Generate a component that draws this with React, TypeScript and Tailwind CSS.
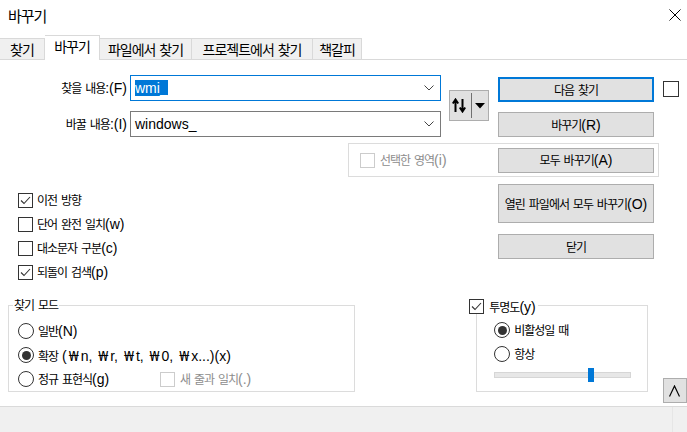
import React from 'react';

const HANGUL = /([\uAC00-\uD7A3]+|₩)/;

function T({ s, k = 'n' }: { s: string; k?: 'n' | 'tab' | 'title' }) {
  const parts = s.split(HANGUL);
  const hc =
    k === 'tab'
      ? "font-['Noto_Sans_CJK_KR',sans-serif] text-[14px] tracking-[-1px]"
      : k === 'title'
      ? "font-['Noto_Sans_CJK_KR',sans-serif] text-[15px] tracking-[-1px]"
      : "font-['Noto_Sans_CJK_KR',sans-serif] text-[12px] tracking-[-1px]";
  return (
    <span className="whitespace-pre">
      {parts.map((p, i) => {
        if (p === '') return null;
        if (p === '₩')
          return (
            <span key={i} className="inline-block w-[14px] text-center font-['Noto_Sans','Noto_Sans_CJK_KR',sans-serif] text-[15px]">
              ₩
            </span>
          );
        if (/[\uAC00-\uD7A3]/.test(p))
          return (
            <span key={i} className={hc}>
              {p}
            </span>
          );
        return (
          <span key={i} className="font-['Liberation_Sans',sans-serif] text-[14px]">
            {p}
          </span>
        );
      })}
    </span>
  );
}

function Check({ checked = false, disabled = false, big = false }: { checked?: boolean; disabled?: boolean; big?: boolean }) {
  return (
    <span
      className={`flex shrink-0 items-center justify-center bg-white border ${big ? 'w-[16px] h-[16px]' : 'w-[15px] h-[15px]'} ${disabled ? 'border-[#cccccc]' : 'border-[#333333]'}`}
    >
      {checked && (
        <svg width="13" height="13" viewBox="0 0 13 13">
          <polyline points="2,6.5 5,9.5 11,3" fill="none" stroke="#333333" strokeWidth="1.1" />
        </svg>
      )}
    </span>
  );
}

function Radio({ checked = false }: { checked?: boolean }) {
  return (
    <span className="flex shrink-0 items-center justify-center w-[16px] h-[16px] rounded-full border border-[#333333] bg-white">
      {checked && <span className="w-[9px] h-[9px] rounded-full bg-[#333333]" />}
    </span>
  );
}

function Chevron() {
  return (
    <svg className="ml-auto" width="10" height="6" viewBox="0 0 10 6">
      <polyline points="0.5,0.5 5,5 9.5,0.5" fill="none" stroke="#444444" strokeWidth="1" />
    </svg>
  );
}

function Btn({ s, tall = false, def = false }: { s: string; tall?: boolean; def?: boolean }) {
  return (
    <div
      className={`flex shrink-0 items-center justify-center w-[156px] bg-[#e1e1e1] whitespace-nowrap ${tall ? 'h-[39px]' : 'h-[25px]'} ${def ? 'border-2 border-[#0078d7]' : 'border border-[#adadad]'}`}
    >
      <T s={s} />
    </div>
  );
}

function Tab({ s, w, sel = false }: { s: string; w: string; sel?: boolean }) {
  return sel ? (
    <div className={`${w} h-[25px] -mb-px flex items-center justify-center pb-[4px] bg-white border-t border-r border-[#d9d9d9] z-10`}>
      <T s={s} k="tab" />
    </div>
  ) : (
    <div className={`${w} h-[21px] flex items-center justify-center bg-[#f0f0f0] border-t border-r border-[#d9d9d9]`}>
      <T s={s} k="tab" />
    </div>
  );
}

export default function App() {
  return (
    <div className="w-[687px] h-[432px] bg-white overflow-hidden flex flex-col text-black font-['Noto_Sans_CJK_KR',sans-serif] text-[12px] leading-none select-none">
      {/* Title bar */}
      <div className="h-[30px] shrink-0 flex items-center pl-[8px] pr-[6px]">
        <T s="바꾸기" k="title" />
        <svg className="ml-auto" width="12" height="12" viewBox="0 0 12 12">
          <path d="M0.5 0.5 L11.5 11.5 M11.5 0.5 L0.5 11.5" stroke="#000000" strokeWidth="1" />
        </svg>
      </div>

      {/* Tabs */}
      <div className="h-[30px] shrink-0 flex items-end border-b border-[#d9d9d9]">
        <Tab s="찾기" w="w-[45px]" />
        <Tab s="바꾸기" w="w-[55px]" sel />
        <Tab s="파일에서 찾기" w="w-[92px]" />
        <Tab s="프로젝트에서 찾기" w="w-[121px]" />
        <Tab s="책갈피" w="w-[49px]" />
      </div>

      {/* Body */}
      <div className="flex flex-col shrink-0">
        {/* Row 1: find / replace */}
        <div className="flex items-start mt-[15px]">
          <div className="flex flex-col gap-[10px]">
            <div className="flex items-center h-[26px]">
              <span className="w-[127px] text-right">
                <T s="찾을 내용:(F)" />
              </span>
              <div className="ml-[3px] w-[311px] h-[26px] border border-[#0078d7] bg-white flex items-center pl-[4px] pr-[6px]">
                <span className="bg-[#0078d7] text-white font-['Liberation_Sans',sans-serif] text-[14px] leading-[16px]">wmi_</span>
                <Chevron />
              </div>
            </div>
            <div className="flex items-center h-[26px]">
              <span className="w-[127px] text-right">
                <T s="바꿀 내용:(I)" />
              </span>
              <div className="ml-[3px] w-[311px] h-[26px] border border-[#7a7a7a] bg-white flex items-center pl-[4px] pr-[6px]">
                <span className="font-['Liberation_Sans',sans-serif] text-[14px] leading-[16px]">windows_</span>
                <Chevron />
              </div>
            </div>
          </div>

          <div className="ml-[8px] mt-[15px] w-[40px] h-[31px] bg-[#e1e1e1] border border-[#adadad] flex items-center pl-[2px]">
            <svg width="14" height="15" viewBox="0 0 14 15">
              <path d="M3.5 14 V2.5 M0.8 5.5 L3.5 1.5 L6.2 5.5" fill="none" stroke="#000000" strokeWidth="2" />
              <path d="M10.5 1 V12.5 M7.8 9.5 L10.5 13.5 L13.2 9.5" fill="none" stroke="#000000" strokeWidth="2" />
            </svg>
            <span className="ml-[5px] w-px h-[25px] bg-[#707070]" />
            <svg className="ml-[3px]" width="10" height="6" viewBox="0 0 10 6">
              <polygon points="0,0 10,0 5,5.5" fill="#000000" />
            </svg>
          </div>

          <div className="ml-[9px] mt-[2px] flex flex-col gap-[10px]">
            <Btn s="다음 찾기" def />
            <Btn s="바꾸기(R)" />
          </div>

          <div className="ml-[9px] mt-[6px]">
            <Check big />
          </div>
        </div>

        {/* Row 2: in selection */}
        <div className="mt-[6px] ml-[348px] w-[311px] h-[34px] border border-[#dcdcdc] flex items-center">
          <span className="ml-[11px]">
            <Check disabled />
          </span>
          <span className="ml-[5px] text-[#8d8d8d]">
            <T s="선택한 영역(i)" />
          </span>
          <span className="ml-auto mr-[4px]">
            <Btn s="모두 바꾸기(A)" />
          </span>
        </div>

        {/* Row 3: options + buttons */}
        <div className="flex items-start">
          <div className="w-[498px] pt-[11px] pl-[18px] flex flex-col">
            <div className="h-[24px] flex items-center">
              <Check checked />
              <span className="ml-[4px]">
                <T s="이전 방향" />
              </span>
            </div>
            <div className="h-[24px] flex items-center">
              <Check />
              <span className="ml-[4px]">
                <T s="단어 완전 일치(w)" />
              </span>
            </div>
            <div className="h-[24px] flex items-center">
              <Check />
              <span className="ml-[4px]">
                <T s="대소문자 구분(c)" />
              </span>
            </div>
            <div className="h-[24px] flex items-center">
              <Check checked />
              <span className="ml-[4px]">
                <T s="되돌이 검색(p)" />
              </span>
            </div>
          </div>
          <div className="mt-[7px] flex flex-col gap-[11px]">
            <Btn s="열린 파일에서 모두 바꾸기(O)" tall />
            <Btn s="닫기" />
          </div>
        </div>

        {/* Row 4: groups */}
        <div className="flex items-start mt-[21px]">
          <div className="ml-[8px] w-[350px] h-[87px] relative border border-[#dcdcdc] pl-[9px] pt-[13px] flex flex-col">
            <span className="absolute left-[4px] top-[-8px] bg-white px-[1px] leading-[14px]">
              <T s="찾기 모드" />
            </span>
            <div className="h-[24px] flex items-center">
              <Radio />
              <span className="ml-[4px]">
                <T s="일반(N)" />
              </span>
            </div>
            <div className="h-[24px] flex items-center">
              <Radio checked />
              <span className="ml-[4px]">
                <T s="확장 (₩n, ₩r, ₩t, ₩0, ₩x...)(x)" />
              </span>
            </div>
            <div className="h-[24px] flex items-center">
              <Radio />
              <span className="ml-[4px] w-[122px]">
                <T s="정규 표현식(g)" />
              </span>
              <Check disabled />
              <span className="ml-[5px] text-[#8d8d8d]">
                <T s="새 줄과 일치(.)" />
              </span>
            </div>
          </div>

          <div className="ml-[121px] w-[173px] h-[87px] relative border border-[#dcdcdc] pl-[17px] pt-[12px] flex flex-col">
            <span className="absolute left-[-8px] top-[-7px] bg-white pr-[2px] flex items-center">
              <Check checked />
              <span className="ml-[5px]">
                <T s="투명도(y)" />
              </span>
            </span>
            <div className="h-[24px] flex items-center">
              <Radio checked />
              <span className="ml-[4px]">
                <T s="비활성일 때" />
              </span>
            </div>
            <div className="h-[24px] flex items-center">
              <Radio />
              <span className="ml-[4px]">
                <T s="항상" />
              </span>
            </div>
            <div className="mt-[2px] h-[14px] w-[137px] relative flex items-center">
              <div className="w-full h-[6px] bg-[#e7e7e7] border border-[#d6d6d6]" />
              <div className="absolute left-[94px] top-0 w-[6px] h-[14px] bg-[#0078d7]" />
            </div>
          </div>

          <div className="ml-[15px] mt-[73px] w-[24px] h-[25px] shrink-0 bg-[#e1e1e1] border border-[#adadad] flex items-center pl-[5px]">
            <svg width="11" height="12" viewBox="0 0 11 12">
              <polyline points="0.5,11.5 5.5,1 10.5,11.5" fill="none" stroke="#000000" strokeWidth="1.2" />
            </svg>
          </div>
        </div>
      </div>

      {/* Status strip */}
      <div className="mt-[3px] flex-1 bg-[#f0f0f0] border-t border-[#dadada] flex">
        <div className="ml-auto w-[15px] border-l border-[#e6e6e6]" />
      </div>
    </div>
  );
}
